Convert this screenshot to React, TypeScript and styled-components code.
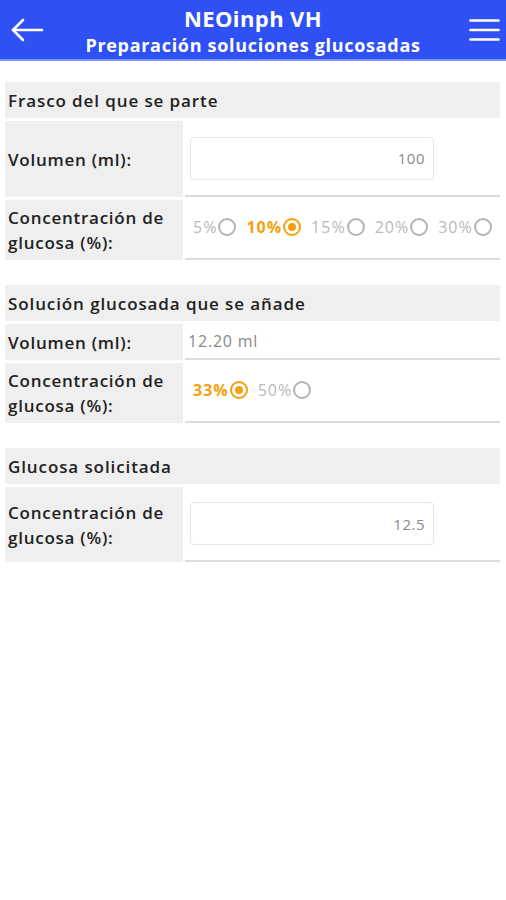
import React from 'react';
import styled, { createGlobalStyle } from 'styled-components';

const GlobalStyle = createGlobalStyle`
  html, body {
    margin: 0;
    padding: 0;
    background: #ffffff;
  }
  body {
    font-family: 'Open Sans', 'Liberation Sans', sans-serif;
    color: #222222;
  }
`;

const theme = {
  blue: '#2f50f4',
  orange: '#f5a00c',
  pale: '#efefef',
  line: '#dcdcdc',
  grey: '#8a8a8a',
  greyLight: '#b9b9b9',
};

const Page = styled.div`
  width: 506px;
  min-height: 900px;
  background: #fff;
`;

const Header = styled.header`
  height: 59px;
  background: ${theme.blue};
  border-bottom: 2px solid #7d93f7;
  display: grid;
  grid-template-columns: 60px 1fr 60px;
  align-items: center;
  color: #fff;
`;

const IconButton = styled.div<{ right?: boolean }>`
  display: flex;
  align-items: center;
  justify-content: ${p => (p.right ? 'flex-end' : 'flex-start')};
  padding: ${p => (p.right ? '0 6px 0 0' : '0 0 0 10px')};
`;

const Titles = styled.div`
  display: flex;
  flex-direction: column;
  align-items: center;
  line-height: 1;
  white-space: nowrap;
`;

const Title = styled.h1`
  margin: 2px 0 0;
  font-size: 22px;
  font-weight: 700;
  letter-spacing: 0.4px;
`;

const Subtitle = styled.h2`
  margin: 7px 0 0;
  font-size: 18px;
  font-weight: 700;
  letter-spacing: 0.7px;
`;

const Content = styled.main`
  padding: 21px 6px 0 5px;
  display: flex;
  flex-direction: column;
  gap: 25px;
`;

const Section = styled.section`
  display: flex;
  flex-direction: column;
  gap: 3px;
`;

const SectionHead = styled.div`
  height: 36px;
  background: ${theme.pale};
  display: flex;
  align-items: center;
  padding-left: 3px;
  font-size: 17px;
  font-weight: 600;
  letter-spacing: 0.9px;
`;

const Row = styled.div<{ h: number }>`
  display: grid;
  grid-template-columns: 178px 1fr;
  column-gap: 2px;
  min-height: ${p => p.h}px;
`;

const Label = styled.div`
  background: ${theme.pale};
  display: flex;
  align-items: center;
  padding: 0 0 0 3px;
  font-size: 17px;
  font-weight: 600;
  letter-spacing: 0.75px;
  line-height: 25px;
  white-space: nowrap;
`;

const Value = styled.div`
  border-bottom: 2px solid ${theme.line};
  display: flex;
  align-items: center;
  padding-left: 5px;
`;

const Input = styled.div`
  width: 244px;
  height: 43px;
  box-sizing: border-box;
  border: 1px solid #e6e6e6;
  border-radius: 4px;
  display: flex;
  align-items: center;
  justify-content: flex-end;
  padding-right: 8px;
  font-size: 15px;
  letter-spacing: 0.5px;
  color: ${theme.grey};
`;

const Plain = styled.span`
  font-size: 16px;
  letter-spacing: 0.8px;
  color: ${theme.grey};
  margin-left: -2px;
`;

const Options = styled.div<{ top?: number }>`
  display: flex;
  align-items: center;
  gap: 10px;
  padding-left: 3px;
  margin-top: ${p => p.top || 0}px;
`;

const Option = styled.label<{ on?: boolean }>`
  display: flex;
  align-items: center;
  gap: 1px;
  font-size: 16px;
  letter-spacing: ${p => (p.on ? '1px' : '1px')};
  font-weight: ${p => (p.on ? 700 : 400)};
  color: ${p => (p.on ? theme.orange : theme.greyLight)};
`;

const Radio = styled.span<{ on?: boolean }>`
  width: 18px;
  height: 18px;
  box-sizing: border-box;
  border-radius: 50%;
  border: 2px solid ${p => (p.on ? theme.orange : '#b3b3b3')};
  display: flex;
  align-items: center;
  justify-content: center;
  &::after {
    content: '';
    width: 8px;
    height: 8px;
    border-radius: 50%;
    background: ${p => (p.on ? theme.orange : 'transparent')};
  }
`;

const BackArrow = () => (
  <svg width="34" height="26" viewBox="0 0 34 26" fill="none" stroke="#fff" strokeWidth="2.6" strokeLinecap="round" strokeLinejoin="round">
    <path d="M32 13H3" />
    <path d="M13 3L3 13l10 10" />
  </svg>
);

const Burger = () => (
  <svg width="31" height="24" viewBox="0 0 31 24" fill="none" stroke="#fff" strokeWidth="2.6" strokeLinecap="round">
    <path d="M1.5 2.5h28" />
    <path d="M1.5 12h28" />
    <path d="M1.5 21.5h28" />
  </svg>
);

interface RadioGroupProps {
  values: string[];
  selected: string;
  top?: number;
}

const RadioGroup: React.FC<RadioGroupProps> = ({ values, selected, top }) => (
  <Options top={top}>
    {values.map(v => (
      <Option key={v} on={v === selected}>
        {v}
        <Radio on={v === selected} />
      </Option>
    ))}
  </Options>
);

const App: React.FC = () => (
  <Page>
    <GlobalStyle />
    <Header>
      <IconButton>
        <BackArrow />
      </IconButton>
      <Titles>
        <Title>NEOinph VH</Title>
        <Subtitle>Preparación soluciones glucosadas</Subtitle>
      </Titles>
      <IconButton right>
        <Burger />
      </IconButton>
    </Header>
    <Content>
      <Section>
        <SectionHead>Frasco del que se parte</SectionHead>
        <Row h={76}>
          <Label>Volumen (ml):</Label>
          <Value>
            <Input>100</Input>
          </Value>
        </Row>
        <Row h={60}>
          <Label>
            Concentración de
            <br />
            glucosa (%):
          </Label>
          <Value>
            <RadioGroup values={['5%', '10%', '15%', '20%', '30%']} selected="10%" top={-4} />
          </Value>
        </Row>
      </Section>
      <Section>
        <SectionHead>Solución glucosada que se añade</SectionHead>
        <Row h={36}>
          <Label>Volumen (ml):</Label>
          <Value>
            <Plain>12.20 ml</Plain>
          </Value>
        </Row>
        <Row h={60}>
          <Label>
            Concentración de
            <br />
            glucosa (%):
          </Label>
          <Value>
            <RadioGroup values={['33%', '50%']} selected="33%" top={-5} />
          </Value>
        </Row>
      </Section>
      <Section>
        <SectionHead>Glucosa solicitada</SectionHead>
        <Row h={75}>
          <Label>
            Concentración de
            <br />
            glucosa (%):
          </Label>
          <Value>
            <Input>12.5</Input>
          </Value>
        </Row>
      </Section>
    </Content>
  </Page>
);

export default App;
